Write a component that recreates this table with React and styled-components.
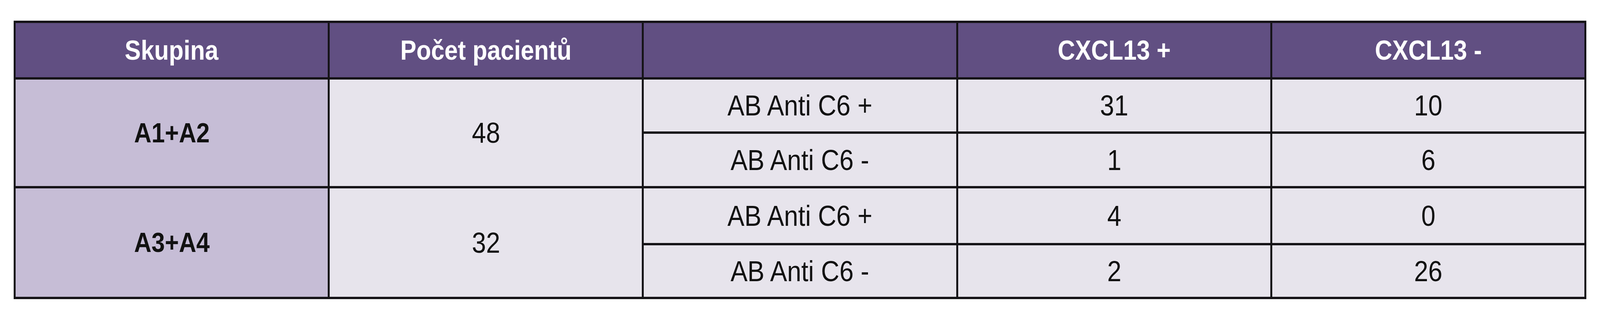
import React from 'react';
import styled, { createGlobalStyle } from 'styled-components';

const GlobalStyle = createGlobalStyle`
  html, body {
    margin: 0;
    padding: 0;
    background: #ffffff;
  }
  body {
    font-family: "Liberation Sans", Arial, sans-serif;
  }
`;

const rows = [
  { group: 'A1+A2', count: 48, items: [
    { label: 'AB Anti C6 +', pos: 31, neg: 10 },
    { label: 'AB Anti C6 -', pos: 1, neg: 6 },
  ] },
  { group: 'A3+A4', count: 32, items: [
    { label: 'AB Anti C6 +', pos: 4, neg: 0 },
    { label: 'AB Anti C6 -', pos: 2, neg: 26 },
  ] },
];

export default function App() {
  return (
    <>
      <GlobalStyle />
      <Page>
        <Table>
          <HeadCell><Text>Skupina</Text></HeadCell>
          <HeadCell><Text>Počet pacientů</Text></HeadCell>
          <HeadCell />
          <HeadCell><Text>CXCL13 +</Text></HeadCell>
          <HeadCell><Text>CXCL13 -</Text></HeadCell>

          {rows.map((r) => (
            <React.Fragment key={r.group}>
              <GroupCell $span={r.items.length}><Text>{r.group}</Text></GroupCell>
              <Cell $span={r.items.length}><Text>{r.count}</Text></Cell>
              {r.items.map((it, i) => (
                <React.Fragment key={i}>
                  <Cell><Text>{it.label}</Text></Cell>
                  <Cell><Text>{it.pos}</Text></Cell>
                  <Cell><Text>{it.neg}</Text></Cell>
                </React.Fragment>
              ))}
            </React.Fragment>
          ))}
        </Table>
      </Page>
    </>
  );
}

const Page = styled.div`
  padding: 53px 35px 0 35px;
`;

const Table = styled.div`
  width: 100%;
  box-sizing: border-box;
  display: grid;
  grid-template-columns: repeat(5, 1fr);
  grid-template-rows: 139px 133px 134px 140px 132px;
  gap: 6px 5px;
  padding: 6px 5px;
  background: #161418;
`;

const BaseCell = styled.div`
  display: flex;
  align-items: center;
  justify-content: center;
  grid-row: ${(p) => (p.$span ? `span ${p.$span}` : 'auto')};
`;

const Text = styled.span`
  display: inline-block;
  white-space: nowrap;
  transform: scaleX(0.88);
`;

const HeadCell = styled(BaseCell)`
  background: #614f82;
  color: #ffffff;
  font-size: 70px;
  font-weight: 700;
`;

const GroupCell = styled(BaseCell)`
  background: #c6bdd6;
  color: #111111;
  font-size: 70px;
  font-weight: 700;
`;

const Cell = styled(BaseCell)`
  background: #e7e4ec;
  color: #111111;
  font-size: 74px;
  font-weight: 400;
`;
